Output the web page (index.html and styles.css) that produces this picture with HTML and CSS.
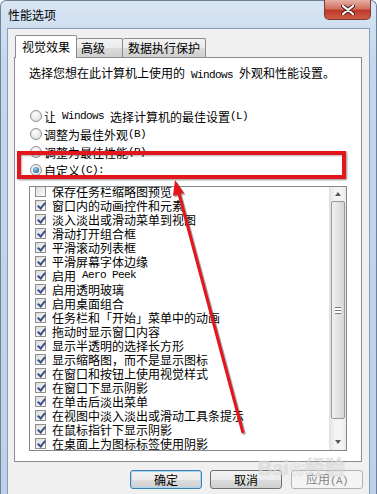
FILE: index.html
```html
<!DOCTYPE html>
<html lang="zh-CN">
<head>
    <meta charset="UTF-8">
    <title>性能选项</title>
    <link rel="stylesheet" href="styles.css">
</head>
<body>
    <div class="window">
        <!-- Title bar -->
        <div class="titlebar">
            <span class="title">性能选项</span>
            <span class="close">
                <svg width="14" height="10" viewBox="0 0 14 10"><path d="M2 1 L12 9 M12 1 L2 9" stroke="#4a1a16" stroke-width="4" stroke-linecap="round"/><path d="M2 1 L12 9 M12 1 L2 9" stroke="#fff" stroke-width="2.2" stroke-linecap="round"/></svg>
            </span>
        </div>

        <div class="frame">
            <div class="client">
                <div class="tabs">
                    <div class="tab tab-active">视觉效果</div>
                    <div class="tab tab-adv">高级</div>
                    <div class="tab tab-dep">数据执行保护</div>
                </div>

                <div class="panel">
                    <p class="intro">选择您想在此计算机上使用的<span class="lat"> Windows </span>外观和性能设置。</p>

                    <div class="options">
                        <div class="opt"><span class="radio"></span>让<span class="lat"> Windows </span>选择计算机的最佳设置<span class="lat">(L)</span></div>
                        <div class="opt"><span class="radio"></span>调整为最佳外观<span class="lat">(B)</span></div>
                        <div class="opt"><span class="radio"></span>调整为最佳性能<span class="lat">(P)</span></div>
                        <div class="opt"><span class="radio radio-on"></span>自定义<span class="lat">(C):</span></div>
                    </div>

                    <div class="listbox">
                        <ul class="items">
                            <li><span class="check"></span>保存任务栏缩略图预览</li>
                            <li><span class="check on"></span>窗口内的动画控件和元素</li>
                            <li><span class="check on"></span>淡入淡出或滑动菜单到视图</li>
                            <li><span class="check on"></span>滑动打开组合框</li>
                            <li><span class="check on"></span>平滑滚动列表框</li>
                            <li><span class="check on"></span>平滑屏幕字体边缘</li>
                            <li><span class="check on"></span>启用<span class="lat"> Aero Peek</span></li>
                            <li><span class="check on"></span>启用透明玻璃</li>
                            <li><span class="check on"></span>启用桌面组合</li>
                            <li><span class="check on"></span>任务栏和「开始」菜单中的动画</li>
                            <li><span class="check on"></span>拖动时显示窗口内容</li>
                            <li><span class="check on"></span>显示半透明的选择长方形</li>
                            <li><span class="check on"></span>显示缩略图，而不是显示图标</li>
                            <li><span class="check on"></span>在窗口和按钮上使用视觉样式</li>
                            <li><span class="check on"></span>在窗口下显示阴影</li>
                            <li><span class="check on"></span>在单击后淡出菜单</li>
                            <li><span class="check on"></span>在视图中淡入淡出或滑动工具条提示</li>
                            <li><span class="check on"></span>在鼠标指针下显示阴影</li>
                            <li><span class="check on"></span>在桌面上为图标标签使用阴影</li>
                        </ul>
                        <div class="scrollbar">
                            <span class="sb-btn"><span class="tri-up"></span></span>
                            <span class="sb-track"><span class="thumb"><span class="grip"></span></span></span>
                            <span class="sb-btn sb-down"><span class="tri-down"></span></span>
                        </div>
                    </div>
                </div>

                <div class="buttons">
                    <button class="btn btn-default">确定</button>
                    <button class="btn">取消</button>
                    <button class="btn btn-disabled">应用<span class="lat">(A)</span></button>
                </div>
            </div>
        </div>
    </div>

    <!-- red annotation drawn over the dialog -->
    <div class="mark-box"></div>
    <svg class="arrow" width="377" height="494" viewBox="0 0 377 494">
        <g transform="translate(1.5,1.5)" opacity="0.35">
            <line x1="243" y1="433" x2="178" y2="190" stroke="#000" stroke-width="3"/>
            <polygon points="175,180 184,193 173,196" fill="#000"/>
        </g>
        <line x1="243" y1="433" x2="178" y2="190" stroke="#e3161b" stroke-width="3"/>
        <polygon points="175,180 184,193 173,196" fill="#e3161b"/>
    </svg>
    <div class="watermark">Bai<span class="paw">❀</span>经验</div>
</body>
</html>
```

FILE: styles.css
```css
body {
    margin: 0;
    width: 377px;
    height: 494px;
    overflow: hidden;
    font-family: "Noto Sans CJK SC", sans-serif;
    font-size: 12px;
    color: #000;
    position: relative;
}
.lat {
    font-family: "Liberation Mono", monospace;
    font-size: 11px;
    letter-spacing: -0.6px;
    white-space: pre;
}
.window {
    width: 377px;
    height: 494px;
    box-sizing: border-box;
    border: 1px solid #6f8397;
    border-bottom: none;
    border-radius: 6px 6px 0 0;
    background: linear-gradient(#d9e6f4, #c3d7ee 60px, #bcd2ea);
    display: flex;
    flex-direction: column;
}
.titlebar {
    height: 27px;
    display: flex;
    align-items: flex-start;
    padding-left: 7px;
}
.title {
    line-height: 27px;
}
.close {
    margin: -1px 5px 0 auto;
    width: 47px;
    height: 20px;
    box-sizing: border-box;
    border: 1px solid #7b3a33;
    border-top: none;
    border-radius: 0 0 5px 5px;
    background: linear-gradient(#e8b0a6, #d0705f 45%, #c0392b 55%, #cf5b45);
    display: flex;
    align-items: center;
    justify-content: center;
}
.frame {
    flex: 1;
    display: flex;
    padding: 0 6px;
}
.client {
    flex: 1;
    background: #f0f0f0;
    border: 1px solid #8a9db4;
    border-bottom: none;
}
.tabs {
    display: flex;
    align-items: flex-end;
    padding: 6px 0 0 7px;
}
.tab {
    box-sizing: border-box;
    border: 1px solid #898c95;
    border-bottom: none;
    border-radius: 2px 2px 0 0;
    line-height: 18px;
}
.tab-active {
    position: relative;
    z-index: 1;
    width: 62px;
    height: 23px;
    margin-bottom: -1px;
    padding: 2px 0 0 6px;
    background: #fff;
}
.tab-adv, .tab-dep {
    height: 19px;
    background: linear-gradient(#f3f3f3, #ebebeb 50%, #dcdcdc 51%, #cfcfcf);
    border-left: none;
}
.tab-adv {
    width: 46px;
    padding-left: 4px;
}
.tab-dep {
    width: 83px;
    padding-left: 5px;
}
.panel {
    margin: 0 7px 0 6px;
    height: 405px;
    box-sizing: border-box;
    border: 1px solid #898c95;
    background: #fff;
    padding: 8px 0 0 14px;
}
.intro {
    margin: 0;
    line-height: 14px;
    white-space: nowrap;
}
.options {
    margin-top: 25px;
}
.opt {
    display: flex;
    align-items: center;
    height: 18px;
    white-space: nowrap;
}
.radio {
    width: 12px;
    height: 12px;
    box-sizing: border-box;
    margin: 0 2px 0 1px;
    border: 1px solid #8e8f8f;
    border-radius: 50%;
    background: radial-gradient(circle at 40% 35%, #fdfdfd, #d9d9d9);
    position: relative;
}
.radio-on::after {
    content: "";
    position: absolute;
    left: 2px;
    top: 2px;
    width: 6px;
    height: 6px;
    border-radius: 50%;
    background: radial-gradient(circle at 40% 35%, #9fd6f7, #2b6aa3 70%, #1a4d7e);
}
.listbox {
    margin-top: 7px;
    width: 318px;
    height: 265px;
    box-sizing: border-box;
    border: 1px solid #828790;
    display: flex;
    overflow: hidden;
}
.items {
    flex: 1;
    list-style: none;
    margin: -3px 0 0 0;
    padding: 0;
}
.items li {
    display: flex;
    align-items: center;
    height: 14px;
    white-space: nowrap;
}
.check {
    width: 11px;
    height: 11px;
    box-sizing: border-box;
    margin: 0 6px 0 5px;
    border: 1px solid #8e8f8f;
    background: linear-gradient(135deg, #dcdcdc, #fbfbfb);
    position: relative;
}
.check.on::after {
    content: "";
    position: absolute;
    left: 3px;
    top: 0;
    width: 3px;
    height: 6px;
    border: solid #3c4f86;
    border-width: 0 2px 2px 0;
    transform: rotate(40deg);
}
.scrollbar {
    width: 16px;
    display: flex;
    flex-direction: column;
    background: linear-gradient(90deg, #e6e6e6, #f4f4f4 30%, #f4f4f4 70%, #e9e9e9);
    border-left: 1px solid #e0e0e0;
}
.sb-btn {
    height: 14px;
    display: flex;
    align-items: center;
    justify-content: center;
}
.sb-down {
    height: 17px;
}
.tri-up {
    border: 3px solid transparent;
    border-top: none;
    border-bottom: 4px solid #5a5a5a;
}
.tri-down {
    border: 3px solid transparent;
    border-bottom: none;
    border-top: 4px solid #5a5a5a;
}
.sb-track {
    flex: 1;
}
.thumb {
    display: flex;
    align-items: center;
    justify-content: center;
    margin: 0 1px;
    height: 218px;
    box-sizing: border-box;
    border: 1px solid #989898;
    border-radius: 2px;
    background: linear-gradient(90deg, #f0f0f0, #e3e3e3 50%, #d6d6d6);
}
.grip {
    width: 6px;
    height: 5px;
    border-top: 1px solid #777;
    border-bottom: 1px solid #777;
    background: linear-gradient(#fff 2px, #777 2px, #777 3px, #fff 3px);
}
.buttons {
    display: flex;
    justify-content: flex-end;
    gap: 8px;
    margin: 8px 6px 0 0;
}
.btn {
    width: 72px;
    height: 19px;
    padding: 0;
    border: 1px solid #707070;
    border-radius: 3px;
    background: linear-gradient(#f2f2f2, #ebebeb 50%, #dddddd 51%, #cfcfcf);
    font-family: "Noto Sans CJK SC", sans-serif;
    font-size: 12px;
    line-height: 16px;
    color: #000;
}
.btn-default {
    border-color: #3c7fb1;
    box-shadow: inset 0 0 0 1px #a8d7f5;
}
.btn-disabled {
    margin-left: 1px;
    border-color: #adb2b5;
    background: #f4f4f4;
    color: #838383;
}
.mark-box {
    position: absolute;
    left: 17px;
    top: 151px;
    width: 329px;
    height: 28px;
    box-sizing: border-box;
    border: 4px solid #e3161b;
    box-shadow: 1px 1px 2px rgba(0, 0, 0, 0.45), inset 1px 1px 2px rgba(0, 0, 0, 0.3);
}
.arrow {
    position: absolute;
    left: 0;
    top: 0;
}
.watermark {
    position: absolute;
    left: 258px;
    top: 452px;
    font-family: "Liberation Sans", "Noto Sans CJK SC", sans-serif;
    font-size: 20px;
    font-weight: bold;
    color: rgba(255, 255, 255, 0.55);
    text-shadow: 0 0 1px rgba(120, 120, 120, 0.45);
}
.paw {
    font-size: 16px;
}
```
